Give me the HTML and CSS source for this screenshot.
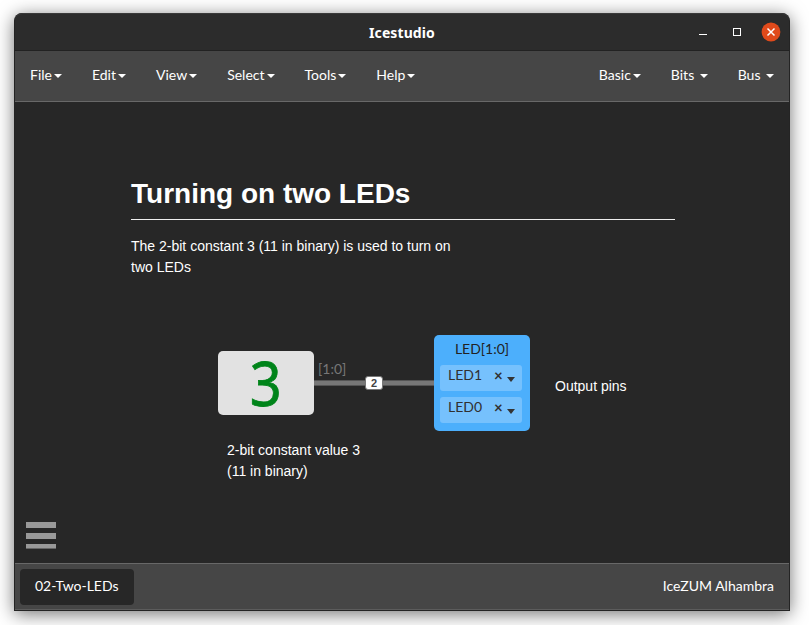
FILE: index.html
```html
<!DOCTYPE html>
<html lang="en">
<head>
<meta charset="utf-8">
<title>Icestudio</title>
<link rel="stylesheet" href="styles.css">
</head>
<body>
<div class="window">
  <header class="titlebar">
    <span class="title">Icestudio</span>
    <div class="controls">
      <svg width="88" height="20" viewBox="0 0 88 20">
        <path d="M6 12.5h8" stroke="#fff" fill="none"/>
        <rect x="40.5" y="6.5" width="7" height="7" stroke="#fff" fill="none"/>
        <circle cx="78" cy="10" r="9.4" fill="#e04a1b"/>
        <path d="M74.5 6.500l7 7M81.500 6.500l-7 7" stroke="#fff" stroke-width="1.500" fill="none"/>
      </svg>
    </div>
  </header>
  <nav class="menubar">
    <ul class="menu">
      <li>File<i class="caret"></i></li>
      <li>Edit<i class="caret"></i></li>
      <li>View<i class="caret"></i></li>
      <li>Select<i class="caret"></i></li>
      <li>Tools<i class="caret"></i></li>
      <li>Help<i class="caret"></i></li>
    </ul>
    <ul class="menu">
      <li>Basic<i class="caret"></i></li>
      <li>Bits<i class="caret spaced"></i></li>
      <li>Bus<i class="caret spaced"></i></li>
    </ul>
  </nav>
  <main class="canvas">
    <section class="info heading">
      <h1>Turning on two LEDs</h1>
      <p>The 2-bit constant 3 (11 in binary) is used to turn on<br>two LEDs</p>
    </section>
    <div class="wire"></div>
    <span class="bus-size">2</span>
    <span class="port-label">[1:0]</span>
    <div class="block constant"><span>3</span></div>
    <div class="block output">
      <div class="name">LED[1:0]</div>
      <div class="pin"><span>LED1</span><b>×</b><i class="arrow"></i></div>
      <div class="pin"><span>LED0</span><b>×</b><i class="arrow"></i></div>
    </div>
    <p class="info note-constant">2-bit constant value 3<br>(11 in binary)</p>
    <p class="info note-output">Output pins</p>
    <div class="burger"><i></i><i></i><i></i></div>
  </main>
  <footer class="statusbar">
    <span class="tab">02-Two-LEDs</span>
    <span class="board">IceZUM Alhambra</span>
  </footer>
</div>
</body>
</html>
```

FILE: styles.css
```css
* { box-sizing: border-box; }
body {
  margin: 0;
  height: 625px;
  padding: 13px 19px 14px 14px;
  overflow: hidden;
  background: #fff;
  font: 14px/20px Lato, sans-serif;
  color: #fff;
}
h1, p, ul { margin: 0; padding: 0; }
.window {
  display: flex;
  flex-direction: column;
  width: 776px;
  height: 598px;
  border: 1px solid #242424;
  border-top: 0;
  border-radius: 8px 8px 0 0;
  background: #272727;
  box-shadow: 0 3px 18px rgba(0, 0, 0, .55);
}
.titlebar {
  display: flex;
  align-items: center;
  justify-content: center;
  position: relative;
  height: 38px;
  background: #2c2c2c;
  border-top: 1px solid #3a3a3a;
  border-bottom: 1px solid #222;
  border-radius: 8px 8px 0 0;
}
.title {
  padding-top: 2px;
  font: bold 14px/20px "Noto Sans", sans-serif;
  letter-spacing: .1px;
}
.controls { position: absolute; right: 8px; top: 8px; height: 20px; }
.controls svg { display: block; }
.menubar {
  display: flex;
  justify-content: space-between;
  height: 51px;
  background: #464646;
  border-bottom: 1px solid #686868;
}
.menu { display: flex; list-style: none; }
.menu li { display: flex; padding: 14px 15px; }
.caret {
  width: 8px;
  height: 4px;
  margin: 9px 0 0 2px;
  border: 4px solid transparent;
  border-top-color: #fff;
  border-bottom: 0;
}
.caret.spaced { margin-left: 5.5px; }
.canvas { position: relative; height: 461px; background: #272727; }
.info { position: absolute; font: 14px/21px "Liberation Sans", Arial, sans-serif; white-space: nowrap; }
.heading { left: 116px; top: 74px; width: 544px; }
.heading h1 {
  height: 44px;
  margin-bottom: 16px;
  border-bottom: 1px solid #eee;
  font-size: 28px;
  line-height: 35px;
}
.wire {
  position: absolute;
  left: 298px;
  top: 278px;
  width: 122px;
  height: 6px;
  background: #777;
  border: 1px solid #555;
}
.bus-size {
  position: absolute;
  left: 350px;
  top: 274px;
  width: 18px;
  height: 14px;
  border: 1px solid #777;
  border-radius: 3px;
  background: #fff;
  color: #444;
  font: bold 11px/12px "Liberation Sans", Arial, sans-serif;
  text-align: center;
}
.port-label { position: absolute; left: 303px; top: 257px; color: #777; }
.block { position: absolute; border-radius: 5px; }
.constant {
  display: flex;
  align-items: center;
  justify-content: center;
  left: 203px;
  top: 249px;
  width: 96px;
  height: 64px;
  background: #e2e2e2;
  color: #00841a;
  font: 62px/64px "Noto Sans", sans-serif;
  -webkit-text-stroke: .8px #00841a;
}
.constant span { transform: translateY(-1px) scaleX(.9); }
.output {
  left: 419px;
  top: 233px;
  width: 96px;
  height: 96px;
  padding: 4px 8px 0 6px;
  background: #4caffc;
  color: #303030;
}
.name { margin: 0 -2px 6px 0; text-align: center; color: #222; }
.pin {
  display: flex;
  height: 26px;
  margin-bottom: 6px;
  padding-left: 8px;
  border-radius: 3px;
  background: #76c1fd;
}
.pin span { width: 46px; }
.pin b { width: 13px; font-size: 15px; }
.arrow {
  width: 8px;
  height: 5px;
  margin-top: 12px;
  border: 4px solid transparent;
  border-top: 5px solid #333;
  border-bottom: 0;
}
.note-constant { left: 212px; top: 338px; }
.note-output { left: 540px; top: 274px; }
.burger {
  position: absolute;
  left: 11px;
  top: 420px;
  display: flex;
  flex-direction: column;
  gap: 5px;
}
.burger i { width: 30px; height: 6px; background: #999; }
.burger i:last-child { height: 5px; border-bottom: 1px solid #666; }
.statusbar {
  display: flex;
  align-items: center;
  justify-content: space-between;
  height: 47px;
  padding: 0 15px 0 5px;
  background: #464646;
  border-top: 1px solid #686868;
  border-bottom: 1px solid #5c5c5c;
}
.tab { height: 36px; padding: 7px 15px; border-radius: 4px; background: #272727; }
.board { padding-bottom: 2px; }
```
